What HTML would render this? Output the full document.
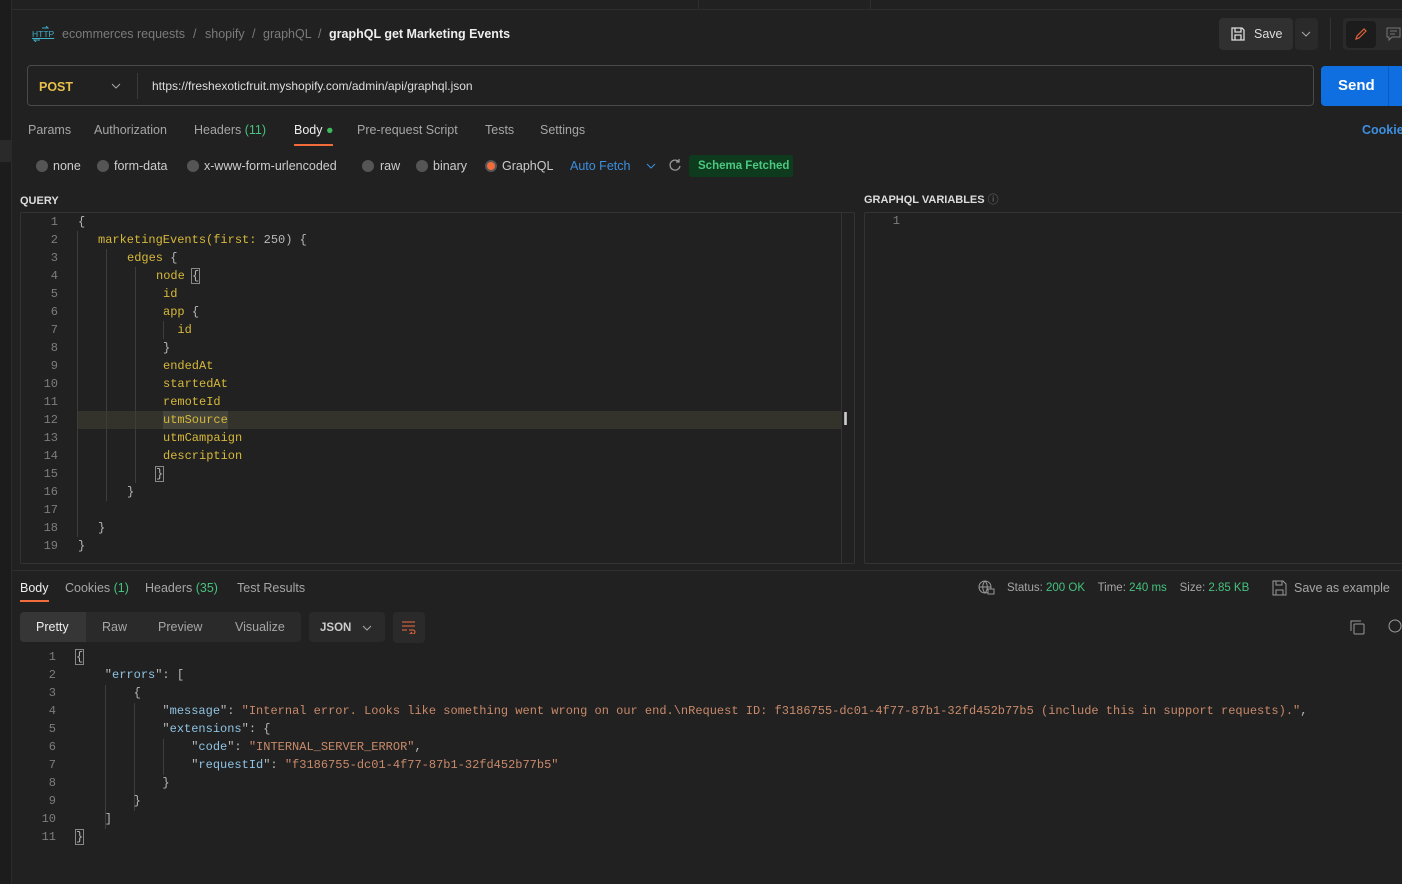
<!DOCTYPE html>
<html><head><meta charset="utf-8"><style>
*{box-sizing:border-box;margin:0;padding:0}
body{width:1402px;height:884px;background:#212121;font-family:"Liberation Sans",sans-serif;color:#a6a6a6;font-size:12.5px;position:relative;overflow:hidden}
.a{position:absolute;white-space:pre}
.m{font-family:"Liberation Mono",monospace;font-size:12px}
.ln{color:#7d7d7d;text-align:right;width:38px}
.y{color:#d6b83a}
.k{color:#8fc3e3}
.s{color:#c98a6a}
.p{color:#b8b8b8}
.g{color:#45c27d}
.guide{position:absolute;width:1px;background:#3d3d3d}
.r{position:absolute;top:160px;width:12px;height:12px;border-radius:50%;background:#555}
.rl{position:absolute;top:159px;color:#ccc;font-size:12.5px;white-space:pre}
.t{position:absolute;top:123px;font-size:12.5px;white-space:pre}
.bc{position:absolute;top:27px;font-size:12.5px;color:#7a7a7a;white-space:pre}
</style></head><body>
<div class="a" style="left:0;top:0;width:12px;height:884px;background:#1c1c1c;border-right:1px solid #2b2b2b"></div>
<div class="a" style="left:0;top:140px;width:12px;height:22px;background:#2a2a2a"></div>
<div class="a" style="left:12px;top:9px;width:1390px;height:1px;background:#2e2e2e"></div>
<div class="a" style="left:698px;top:0;width:1px;height:9px;background:#2e2e2e"></div>
<div class="a" style="left:870px;top:0;width:1px;height:9px;background:#2e2e2e"></div>
<!-- breadcrumb -->
<svg class="a" style="left:32px;top:26px" width="18" height="16"><path d="M10 2h6l-2-2 M8 14H2l2 2" stroke="#3fb0c8" fill="none"/></svg>
<div class="a" style="left:32px;top:29px;font-size:8.5px;color:#3fb0c8;text-decoration:underline">HTTP</div>
<div class="bc" style="left:62px">ecommerces requests</div>
<div class="bc" style="left:193px">/</div>
<div class="bc" style="left:205px">shopify</div>
<div class="bc" style="left:252px">/</div>
<div class="bc" style="left:263px">graphQL</div>
<div class="bc" style="left:318px">/</div>
<div class="bc" style="left:329px;color:#eee;font-weight:bold">graphQL get Marketing Events</div>
<div class="a" style="left:1219px;top:18px;width:74px;height:32px;background:#303030;border-radius:4px"></div>
<svg class="a" style="left:1230px;top:26px" width="16" height="16" viewBox="0 0 16 16" fill="none" stroke="#ddd" stroke-width="1.3"><path d="M2 2h10l2 2v10H2z M5 2v4h6V2 M5 14V9h6v5"/></svg>
<div class="a" style="left:1254px;top:27px;color:#ddd;font-size:12.5px">Save</div>
<div class="a" style="left:1295px;top:18px;width:23px;height:32px;background:#2a2a2a;border-radius:4px"></div>
<svg class="a" style="left:1301px;top:30px" width="10" height="8"><path d="M1 2l4 4 4-4" stroke="#aaa" fill="none"/></svg>
<div class="a" style="left:1330px;top:18px;width:1px;height:32px;background:#333"></div>
<div class="a" style="left:1343px;top:18px;width:60px;height:32px;background:#2a2a2a;border-radius:4px"></div>
<div class="a" style="left:1346px;top:21px;width:30px;height:27px;background:#1c1c1c;border-radius:4px"></div>
<svg class="a" style="left:1353px;top:26px" width="16" height="16"><path d="M3 13l1-3 7-7 2 2-7 7z" stroke="#e0603a" fill="none" stroke-width="1.2"/></svg>
<svg class="a" style="left:1386px;top:26px" width="16" height="16"><path d="M1 2h13v9H6l-3 3v-3H1z M4 5h7M4 8h5" stroke="#777" fill="none"/></svg>
<!-- url bar -->
<div class="a" style="left:27px;top:65px;width:1287px;height:41px;border:1px solid #4a4a4a;border-radius:4px"></div>
<div class="a" style="left:39px;top:80px;color:#e6c04a;font-weight:bold;font-size:12.5px">POST</div>
<svg class="a" style="left:111px;top:82px" width="10" height="8"><path d="M1 2l4 4 4-4" stroke="#aaa" fill="none"/></svg>
<div class="a" style="left:137px;top:73px;width:1px;height:26px;background:#3a3a3a"></div>
<div class="a" style="left:152px;top:79px;color:#ddd;font-size:12px">https://freshexoticfruit.myshopify.com/admin/api/graphql.json</div>
<div class="a" style="left:1321px;top:66px;width:90px;height:40px;background:#0f6fe0;border-radius:4px"></div>
<div class="a" style="left:1388px;top:66px;width:1px;height:40px;background:#0b5cc0"></div>
<div class="a" style="left:1338px;top:77px;color:#fff;font-weight:bold;font-size:15px">Send</div>
<!-- tabs -->
<div class="t" style="left:28px">Params</div>
<div class="t" style="left:94px">Authorization</div>
<div class="t" style="left:194px">Headers <span class="g">(11)</span></div>
<div class="t" style="left:294px;color:#eee">Body <span style="color:#3cba5c">●</span></div>
<div class="a" style="left:294px;top:144px;width:39px;height:2px;background:#f26b3a"></div>
<div class="t" style="left:357px">Pre-request Script</div>
<div class="t" style="left:485px">Tests</div>
<div class="t" style="left:540px">Settings</div>
<div class="t" style="left:1362px;color:#3d8fe0;font-weight:bold">Cookies</div>
<!-- radios -->
<div class="r" style="left:36px"></div><div class="rl" style="left:53px">none</div>
<div class="r" style="left:97px"></div><div class="rl" style="left:114px">form-data</div>
<div class="r" style="left:187px"></div><div class="rl" style="left:204px">x-www-form-urlencoded</div>
<div class="r" style="left:362px"></div><div class="rl" style="left:380px">raw</div>
<div class="r" style="left:416px"></div><div class="rl" style="left:433px">binary</div>
<div class="r" style="left:485px;background:#f26b3a;border:2px solid #555"></div><div class="rl" style="left:502px">GraphQL</div>
<div class="a" style="left:570px;top:159px;color:#3d8fe0;font-size:12.5px">Auto Fetch</div>
<svg class="a" style="left:646px;top:162px" width="10" height="8"><path d="M1 2l4 4 4-4" stroke="#3d8fe0" fill="none"/></svg>
<svg class="a" style="left:668px;top:158px" width="14" height="14"><path d="M11 4A5 5 0 1 0 12 8 M11 1v3H8" stroke="#999" fill="none" stroke-width="1.3"/></svg>
<div class="a" style="left:689px;top:155px;width:104px;height:22px;background:#0e3a1e;border-radius:3px"></div>
<div class="a" style="left:698px;top:160px;color:#4ac97f;font-size:11.5px;font-weight:bold">Schema Fetched</div>
<!-- query -->
<div class="a" style="left:20px;top:195px;color:#ddd;font-weight:bold;font-size:11px">QUERY</div>
<div class="a" style="left:864px;top:194px;color:#ddd;font-weight:bold;font-size:11px;line-height:13px">GRAPHQL VARIABLES <span style="color:#777;font-weight:normal">ⓘ</span></div>
<div class="a" style="left:20px;top:212px;width:835px;height:352px;border:1px solid #333;border-radius:2px"></div>
<div class="a" style="left:841px;top:213px;width:1px;height:350px;background:#333"></div>
<div class="a" style="left:864px;top:212px;width:540px;height:352px;border:1px solid #333;border-radius:2px"></div>
<div class="a m ln" style="left:862px;top:214px">1</div>
<div class="a" style="left:78px;top:411px;width:763px;height:18px;background:#33332c"></div>
<div class="a" style="left:163px;top:411px;width:65px;height:18px;background:#44443a"></div>
<div class="a" style="left:843px;top:410px;width:10px;height:19px;color:#ccc;font-size:18px;font-weight:bold;line-height:18px">I</div>
<div class="guide" style="left:77px;top:231px;height:306px"></div>
<div class="guide" style="left:106px;top:249px;height:252px"></div>
<div class="guide" style="left:135px;top:267px;height:216px"></div>
<div class="guide" style="left:163px;top:321px;height:18px"></div>
<div class="a m ln" style="left:20px;top:213px;line-height:18px">1
2
3
4
5
6
7
8
9
10
11
12
13
14
15
16
17
18
19</div>
<div class="a m p" style="left:78px;top:213px;line-height:18px">{</div>
<div class="a m y" style="left:98px;top:231px;line-height:18px">marketingEvents(first: <span class="p">250) {</span></div>
<div class="a m y" style="left:127px;top:249px;line-height:18px">edges <span class="p">{</span></div>
<div class="a m y" style="left:156px;top:267px;line-height:18px">node <span class="p" style="outline:1px solid #888">{</span></div>
<div class="a m y" style="left:163px;top:285px;line-height:18px">id
app <span class="p">{</span>
  id
<span class="p">}</span>
endedAt
startedAt
remoteId
utmSource
utmCampaign
description</div>
<div class="a m p" style="left:156px;top:465px;line-height:18px"><span style="outline:1px solid #888">}</span></div>
<div class="a m p" style="left:127px;top:483px;line-height:18px">}</div>
<div class="a m p" style="left:98px;top:519px;line-height:18px">}</div>
<div class="a m p" style="left:78px;top:537px;line-height:18px">}</div>
<!-- response -->
<div class="a" style="left:12px;top:570px;width:1390px;height:1px;background:#2e2e2e"></div>
<div class="a" style="left:20px;top:581px;color:#eee;font-size:12.5px">Body</div>
<div class="a" style="left:20px;top:600px;width:29px;height:2px;background:#f26b3a"></div>
<div class="a" style="left:65px;top:581px;font-size:12.5px">Cookies <span class="g">(1)</span></div>
<div class="a" style="left:145px;top:581px;font-size:12.5px">Headers <span class="g">(35)</span></div>
<div class="a" style="left:237px;top:581px;font-size:12.5px">Test Results</div>
<svg class="a" style="left:978px;top:580px" width="18" height="16"><circle cx="7" cy="7" r="6" stroke="#999" fill="none"/><path d="M1 7h12M7 1c-3 3-3 9 0 12M7 1c3 3 3 9 0 12" stroke="#999" fill="none"/><rect x="10" y="9" width="6" height="5" fill="#212121" stroke="#999"/></svg>
<div class="a" style="left:1007px;top:582px;font-size:11.5px">Status: <span class="g">200 OK</span>    Time: <span class="g">240 ms</span>    Size: <span class="g">2.85 KB</span></div>
<svg class="a" style="left:1272px;top:580px" width="15" height="16"><path d="M1 1h10l3 3v11H1z M4 1v4h6V1 M4 15v-5h7v5" stroke="#999" fill="none"/></svg>
<div class="a" style="left:1294px;top:581px;font-size:12.5px">Save as example</div>
<div class="a" style="left:20px;top:612px;width:281px;height:30px;background:#2a2a2a;border-radius:4px"></div>
<div class="a" style="left:20px;top:612px;width:66px;height:30px;background:#363636;border-radius:4px 0 0 4px"></div>
<div class="a" style="left:36px;top:620px;color:#eee;font-size:12.5px">Pretty</div>
<div class="a" style="left:102px;top:620px;font-size:12.5px">Raw</div>
<div class="a" style="left:158px;top:620px;font-size:12.5px">Preview</div>
<div class="a" style="left:235px;top:620px;font-size:12.5px">Visualize</div>
<div class="a" style="left:309px;top:612px;width:76px;height:30px;background:#2a2a2a;border-radius:4px"></div>
<div class="a" style="left:320px;top:622px;color:#ccc;font-size:11.5px;font-weight:bold">JSON</div>
<svg class="a" style="left:362px;top:624px" width="10" height="8"><path d="M1 2l4 4 4-4" stroke="#aaa" fill="none"/></svg>
<div class="a" style="left:393px;top:612px;width:32px;height:31px;background:#2a2a2a;border-radius:4px"></div>
<svg class="a" style="left:401px;top:620px" width="16" height="14"><path d="M1 2h13M1 6h13M1 10h5 M8 10h4a2 2 0 0 1 0 4h-2 M11 12l-2 2 2 2" stroke="#f26b3a" fill="none"/></svg>
<svg class="a" style="left:1350px;top:620px" width="15" height="15"><rect x="4" y="4" width="10" height="10" rx="1" stroke="#999" fill="none"/><path d="M1 11V1h10" stroke="#999" fill="none"/></svg>
<svg class="a" style="left:1388px;top:619px" width="14" height="16"><circle cx="7" cy="7" r="6" stroke="#999" fill="none"/></svg>
<div class="guide" style="left:105px;top:685px;height:144px"></div>
<div class="guide" style="left:134px;top:703px;height:108px"></div>
<div class="guide" style="left:163px;top:739px;height:36px"></div>
<div class="a m ln" style="left:18px;top:648px;line-height:18px">1
2
3
4
5
6
7
8
9
10
11</div>
<div class="a m p" style="left:76px;top:648px;line-height:18px"><span style="outline:1px solid #888">{</span>
    "<span class="k">errors</span>": [
        {
            "<span class="k">message</span>": <span class="s">"Internal error. Looks like something went wrong on our end.\nRequest ID: f3186755-dc01-4f77-87b1-32fd452b77b5 (include this in support requests)."</span>,
            "<span class="k">extensions</span>": {
                "<span class="k">code</span>": <span class="s">"INTERNAL_SERVER_ERROR"</span>,
                "<span class="k">requestId</span>": <span class="s">"f3186755-dc01-4f77-87b1-32fd452b77b5"</span>
            }
        }
    ]
<span style="outline:1px solid #888">}</span></div>
</body></html>
